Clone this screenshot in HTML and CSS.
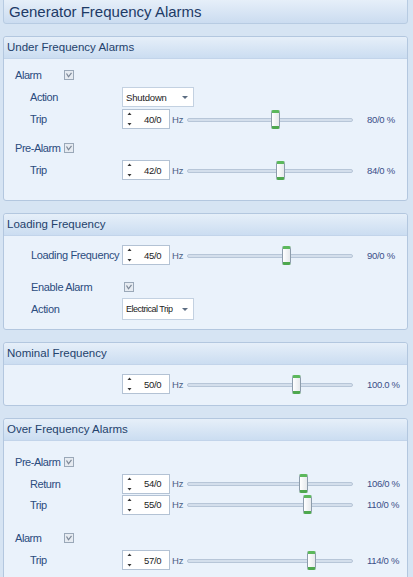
FILE: index.html
```html
<!DOCTYPE html>
<html>
<head>
<meta charset="utf-8">
<link rel="stylesheet" href="styles.css">
</head>
<body>
<div class="page">
  <div class="title">Generator Frequency Alarms</div>

  <section class="sec sec-under">
    <div class="sec-head">Under Frequency Alarms</div>
    <div class="sec-body">
      <div class="row">
        <span class="lbl l1">Alarm</span>
        <span class="cb"><svg width="10" height="10" viewBox="0 0 10 10"><rect x="0.5" y="0.5" width="9" height="9" fill="#e6ebf1" stroke="#9aa8b8"/><path d="M2.5 3.5 L4.5 6.8 L7.5 2.8" fill="none" stroke="#7b8797" stroke-width="1.2"/></svg></span>
      </div>
      <div class="row">
        <span class="lbl l2">Action</span>
        <span class="dd"><span class="dd-text">Shutdown</span><span class="dd-arrow"></span></span>
      </div>
      <div class="row">
        <span class="lbl l2">Trip</span>
        <span class="spin"><span class="arrows"><svg width="5" height="14" viewBox="0 0 5 14"><path d="M0.5 3 L2.5 0.5 L4.5 3 Z" fill="#333"/><path d="M0.5 11 L2.5 13.5 L4.5 11 Z" fill="#333"/></svg></span><span class="val">40/0</span></span>
        <span class="hz">Hz</span>
        <span class="slider"><span class="track"></span><span class="thumb" style="left:84.3px"></span></span>
        <span class="pct">80/0 %</span>
      </div>
      <div class="row gap7">
        <span class="lbl l1">Pre-Alarm</span>
        <span class="cb"><svg width="10" height="10" viewBox="0 0 10 10"><rect x="0.5" y="0.5" width="9" height="9" fill="#e6ebf1" stroke="#9aa8b8"/><path d="M2.5 3.5 L4.5 6.8 L7.5 2.8" fill="none" stroke="#7b8797" stroke-width="1.2"/></svg></span>
      </div>
      <div class="row">
        <span class="lbl l2">Trip</span>
        <span class="spin"><span class="arrows"><svg width="5" height="14" viewBox="0 0 5 14"><path d="M0.5 3 L2.5 0.5 L4.5 3 Z" fill="#333"/><path d="M0.5 11 L2.5 13.5 L4.5 11 Z" fill="#333"/></svg></span><span class="val">42/0</span></span>
        <span class="hz">Hz</span>
        <span class="slider"><span class="track"></span><span class="thumb" style="left:88.5px"></span></span>
        <span class="pct">84/0 %</span>
      </div>
    </div>
  </section>

  <section class="sec sec-loading">
    <div class="sec-head">Loading Frequency</div>
    <div class="sec-body">
      <div class="row">
        <span class="lbl l2 w">Loading Frequency</span>
        <span class="spin"><span class="arrows"><svg width="5" height="14" viewBox="0 0 5 14"><path d="M0.5 3 L2.5 0.5 L4.5 3 Z" fill="#333"/><path d="M0.5 11 L2.5 13.5 L4.5 11 Z" fill="#333"/></svg></span><span class="val">45/0</span></span>
        <span class="hz">Hz</span>
        <span class="slider"><span class="track"></span><span class="thumb" style="left:94.8px"></span></span>
        <span class="pct">90/0 %</span>
      </div>
      <div class="row gap10">
        <span class="lbl l2 w">Enable Alarm</span>
        <span class="cb cb-ctl"><svg width="10" height="10" viewBox="0 0 10 10"><rect x="0.5" y="0.5" width="9" height="9" fill="#e6ebf1" stroke="#9aa8b8"/><path d="M2.5 3.5 L4.5 6.8 L7.5 2.8" fill="none" stroke="#7b8797" stroke-width="1.2"/></svg></span>
      </div>
      <div class="row">
        <span class="lbl l2 w">Action</span>
        <span class="dd dd-tall"><span class="dd-text dd-narrow">Electrical Trip</span><span class="dd-arrow"></span></span>
      </div>
    </div>
  </section>

  <section class="sec sec-nominal">
    <div class="sec-head">Nominal Frequency</div>
    <div class="sec-body">
      <div class="row">
        <span class="lbl l2 w"></span>
        <span class="spin"><span class="arrows"><svg width="5" height="14" viewBox="0 0 5 14"><path d="M0.5 3 L2.5 0.5 L4.5 3 Z" fill="#333"/><path d="M0.5 11 L2.5 13.5 L4.5 11 Z" fill="#333"/></svg></span><span class="val">50/0</span></span>
        <span class="hz">Hz</span>
        <span class="slider"><span class="track"></span><span class="thumb" style="left:105.3px"></span></span>
        <span class="pct">100.0 %</span>
      </div>
    </div>
  </section>

  <section class="sec sec-over">
    <div class="sec-head">Over Frequency Alarms</div>
    <div class="sec-body">
      <div class="row">
        <span class="lbl l1">Pre-Alarm</span>
        <span class="cb"><svg width="10" height="10" viewBox="0 0 10 10"><rect x="0.5" y="0.5" width="9" height="9" fill="#e6ebf1" stroke="#9aa8b8"/><path d="M2.5 3.5 L4.5 6.8 L7.5 2.8" fill="none" stroke="#7b8797" stroke-width="1.2"/></svg></span>
      </div>
      <div class="row r21">
        <span class="lbl l2">Return</span>
        <span class="spin"><span class="arrows"><svg width="5" height="14" viewBox="0 0 5 14"><path d="M0.5 3 L2.5 0.5 L4.5 3 Z" fill="#333"/><path d="M0.5 11 L2.5 13.5 L4.5 11 Z" fill="#333"/></svg></span><span class="val">54/0</span></span>
        <span class="hz">Hz</span>
        <span class="slider"><span class="track"></span><span class="thumb" style="left:111.7px"></span></span>
        <span class="pct">106/0 %</span>
      </div>
      <div class="row r21">
        <span class="lbl l2">Trip</span>
        <span class="spin"><span class="arrows"><svg width="5" height="14" viewBox="0 0 5 14"><path d="M0.5 3 L2.5 0.5 L4.5 3 Z" fill="#333"/><path d="M0.5 11 L2.5 13.5 L4.5 11 Z" fill="#333"/></svg></span><span class="val">55/0</span></span>
        <span class="hz">Hz</span>
        <span class="slider"><span class="track"></span><span class="thumb" style="left:115.9px"></span></span>
        <span class="pct">110/0 %</span>
      </div>
      <div class="row gap12">
        <span class="lbl l1">Alarm</span>
        <span class="cb"><svg width="10" height="10" viewBox="0 0 10 10"><rect x="0.5" y="0.5" width="9" height="9" fill="#e6ebf1" stroke="#9aa8b8"/><path d="M2.5 3.5 L4.5 6.8 L7.5 2.8" fill="none" stroke="#7b8797" stroke-width="1.2"/></svg></span>
      </div>
      <div class="row">
        <span class="lbl l2">Trip</span>
        <span class="spin"><span class="arrows"><svg width="5" height="14" viewBox="0 0 5 14"><path d="M0.5 3 L2.5 0.5 L4.5 3 Z" fill="#333"/><path d="M0.5 11 L2.5 13.5 L4.5 11 Z" fill="#333"/></svg></span><span class="val">57/0</span></span>
        <span class="hz">Hz</span>
        <span class="slider"><span class="track"></span><span class="thumb" style="left:120.1px"></span></span>
        <span class="pct">114/0 %</span>
      </div>
    </div>
  </section>
</div>
</body>
</html>
```

FILE: styles.css
```css
* { box-sizing: border-box; }

body {
  margin: 0;
  background: #d6e4f3;
  font-family: "Liberation Sans", Arial, sans-serif;
  color: #2b4a73;
  overflow: hidden;
}

.page {
  padding: 0 5px 0 3px;
}

.title {
  height: 25px;
  margin-top: -1px;
  margin-bottom: 12px;
  border: 1px solid #b7cbe2;
  border-radius: 0 0 3px 3px;
  background: linear-gradient(#e6eff9, #cbdcf0);
  font-size: 15px;
  line-height: 23px;
  padding-left: 5px;
  color: #1d3a66;
}

.sec {
  border: 1px solid #b3c7df;
  border-radius: 3px;
  background: #eaf2fb;
  margin-bottom: 12px;
}

.sec-head {
  height: 22px;
  background: linear-gradient(#e6eff9, #cbddf1);
  border-bottom: 1px solid #c2d4ea;
  border-radius: 3px 3px 0 0;
  font-size: 11.5px;
  line-height: 21px;
  padding-left: 3px;
  color: #24426c;
}

.sec-body {
  padding-left: 11px;
}

.sec-under .sec-body { padding-top: 5px; padding-bottom: 19px; }
.sec-loading .sec-body { padding-top: 8px; padding-bottom: 9px; }
.sec-nominal .sec-body { padding-top: 8px; padding-bottom: 10px; }
.sec-over .sec-body { padding-top: 10px; padding-bottom: 20px; }

.row {
  display: flex;
  align-items: center;
  height: 22px;
}
.row.r21 { height: 21px; }
.gap7 { margin-top: 7px; }
.gap10 { margin-top: 10px; }
.gap12 { margin-top: 12px; }

.lbl {
  font-size: 11px;
  letter-spacing: -0.45px;
  color: #2a4c7e;
  white-space: nowrap;
}
.l1 { width: 49px; }
.l2 { width: 92px; margin-left: 15px; }
.l2.w { margin-left: 16px; width: 91px; letter-spacing: -0.35px; }

.cb {
  display: flex;
  width: 10px;
  height: 10px;
}
.cb-ctl { margin-left: 2px; }

.dd {
  display: flex;
  align-items: center;
  width: 72px;
  height: 20px;
  border: 1px solid #c3d1e1;
  background: #fff;
  padding-left: 3px;
  position: relative;
}
.dd-tall { height: 22px; }
.dd-text {
  font-size: 9.5px;
  color: #222;
  letter-spacing: -0.2px;
  white-space: nowrap;
}
.dd-narrow { letter-spacing: -0.5px; font-size: 9px; }
.dd-arrow {
  position: absolute;
  right: 5px;
  top: 50%;
  margin-top: -1px;
  border-left: 3px solid transparent;
  border-right: 3px solid transparent;
  border-top: 3px solid #5c6d82;
}

.spin {
  display: flex;
  align-items: center;
  width: 48px;
  height: 20px;
  border: 1px solid #b3c2d4;
  background: #fff;
}
.arrows {
  display: flex;
  margin-left: 4px;
  width: 5px;
}
.val {
  margin-left: 12px;
  font-size: 9.5px;
  color: #222;
  letter-spacing: -0.3px;
}

.hz {
  width: 13px;
  margin-left: 2px;
  font-size: 9.5px;
  color: #4a6084;
}

.slider {
  position: relative;
  width: 166px;
  height: 19px;
  margin-left: 2px;
}
.track {
  position: absolute;
  left: 0;
  right: 0;
  top: 8px;
  height: 4px;
  background: #d4dfec;
  border: 1px solid #b7c6d8;
  border-radius: 2px;
}
.thumb {
  position: absolute;
  top: 0;
  width: 9px;
  height: 19px;
  border: 1px solid #8d9cab;
  border-top: 3px solid #5cb85c;
  border-bottom: 3px solid #4ea84e;
  border-radius: 2px;
  background: linear-gradient(90deg, #ffffff, #e6e9ec);
}

.pct {
  margin-left: 14px;
  font-size: 9.5px;
  color: #3a4f88;
  letter-spacing: -0.3px;
  white-space: nowrap;
}
```
